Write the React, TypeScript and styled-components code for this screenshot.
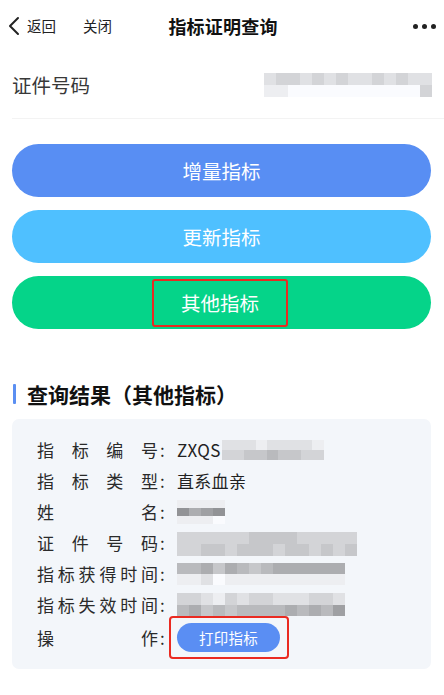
import React from "react";
import styled, { createGlobalStyle } from "styled-components";

const GlobalStyle = createGlobalStyle`
  html, body { margin: 0; padding: 0; background: #ffffff; }
  body {
    font-family: "Noto Sans CJK SC", "Noto Sans", "Liberation Sans", sans-serif;
    color: #222;
    -webkit-font-smoothing: antialiased;
  }
  * { box-sizing: border-box; }
`;

const Page = styled.div`
  width: 444px;
  min-height: 695px;
  background: #fff;
`;

const NavBar = styled.div`
  height: 52px;
  display: grid;
  grid-template-columns: 1fr auto 1fr;
  align-items: center;
  padding: 0 6px 0 8px;
`;

const NavLeft = styled.div`
  display: flex;
  align-items: center;
`;

const NavLink = styled.span<{ $gap?: number }>`
  font-size: 14.5px;
  color: #222;
  margin-left: ${(p) => p.$gap ?? 0}px;
  line-height: 20px;
`;

const NavTitle = styled.div`
  font-size: 18px;
  font-weight: 700;
  color: #111;
  letter-spacing: 0.2px;
`;

const NavRight = styled.div`
  display: flex;
  justify-content: flex-end;
  gap: 4px;
  padding-right: 2px;
`;

const Dot = styled.span`
  width: 5px;
  height: 5px;
  border-radius: 50%;
  background: #222;
`;

const IdRow = styled.div`
  height: 67px;
  margin-left: 12px;
  padding-right: 12px;
  display: flex;
  align-items: center;
  justify-content: space-between;
  border-bottom: 1px solid #f3f3f3;
`;

const IdLabel = styled.span`
  font-size: 19.5px;
  color: #383838;
  margin-top: -2px;
`;

const ButtonStack = styled.div`
  display: flex;
  flex-direction: column;
  gap: 13px;
  padding: 25px 13px 0 12px;
`;

const BigButton = styled.div<{ $bg: string }>`
  height: 53px;
  border-radius: 27px;
  background: ${(p) => p.$bg};
  color: #fff;
  font-size: 19.5px;
  display: flex;
  align-items: center;
  justify-content: center;
`;

const HighlightText = styled.span`
  display: inline-block;
  padding: 10px 27px;
  line-height: 24px;
  border: 2px solid #ea2a21;
  border-radius: 3px;
  margin-left: -3px;
`;

const SectionTitle = styled.div`
  margin: 52px 0 0 13px;
  display: flex;
  align-items: center;
  height: 26px;
`;

const TitleBar = styled.span`
  width: 3px;
  height: 20px;
  background: #5b8ff2;
  border-radius: 1px;
  margin-right: 11px;
`;

const TitleText = styled.span`
  font-size: 21px;
  font-weight: 700;
  color: #111;
  line-height: 26px;
`;

const Card = styled.div`
  margin: 12px 13px 0 12px;
  background: #f3f6fa;
  border-radius: 7px;
  padding: 15px 0 14px 25px;
`;

const InfoRow = styled.div<{ $h?: number }>`
  display: flex;
  align-items: center;
  height: ${(p) => p.$h ?? 31}px;
  font-size: 17px;
  color: #222;
`;

const Label = styled.span`
  width: 121px;
  text-align: justify;
  text-align-last: justify;
  color: #2a2a2a;
  white-space: nowrap;
`;

const Colon = styled.span`
  width: 19px;
  padding-left: 2px;
  color: #2a2a2a;
`;

const Value = styled.span`
  display: flex;
  align-items: center;
  letter-spacing: 0.3px;
`;

const PrintWrap = styled.span`
  position: relative;
  display: inline-flex;
  &::after {
    content: "";
    position: absolute;
    inset: -7px -9px -7px -8px;
    border: 2px solid #ea2a21;
    border-radius: 4px;
    pointer-events: none;
  }
`;

const PrintButton = styled.span`
  width: 103px;
  height: 29px;
  border-radius: 15px;
  background: #5a8ef3;
  color: #fff;
  font-size: 14.5px;
  display: flex;
  align-items: center;
  justify-content: center;
  letter-spacing: 0.3px;
`;

const MosaicGrid = styled.div<{ $w: number; $h: number; $cols: number; $rows: number }>`
  width: ${(p) => p.$w}px;
  height: ${(p) => p.$h}px;
  display: grid;
  grid-template-columns: repeat(${(p) => p.$cols}, 1fr);
  grid-template-rows: repeat(${(p) => p.$rows}, 1fr);
  flex-shrink: 0;
`;

const Cell = styled.span``;

const shade = (d: string) => {
  const v = 250 - parseInt(d, 10) * 13;
  return `rgb(${v}, ${v + 1}, ${v + 4})`;
};

const Mosaic: React.FC<{ w: number; h: number; rows: string[]; style?: React.CSSProperties }> = ({
  w,
  h,
  rows,
  style,
}) => (
  <MosaicGrid $w={w} $h={h} $cols={rows[0].length} $rows={rows.length} style={style}>
    {rows.flatMap((r, i) =>
      r.split("").map((c, j) => <Cell key={`${i}-${j}`} style={{ background: shade(c) }} />)
    )}
  </MosaicGrid>
);

const Chevron = () => (
  <svg width="12" height="20" viewBox="0 0 12 20" fill="none">
    <path d="M10 2 L2 10 L10 18" stroke="#222" strokeWidth="2" strokeLinecap="round" strokeLinejoin="round" />
  </svg>
);

const rows: { label: string; value: React.ReactNode }[] = [
  {
    label: "指标编号",
    value: (
      <>
        ZXQS
        <Mosaic w={102} h={20} rows={["222122221", "334454433"]} style={{ marginLeft: 1 }} />
      </>
    ),
  },
  { label: "指标类型", value: "直系血亲" },
  { label: "姓名", value: <Mosaic w={48} h={24} rows={["1111", "8678", "1110"]} /> },
  {
    label: "证件号码",
    value: <Mosaic w={180} h={24} rows={["333333444433333", "334434443443434"]} style={{ marginTop: 2 }} />,
  },
  {
    label: "指标获得时间",
    value: <Mosaic w={168} h={22} rows={["55646545666666", "11201111111111"]} />,
  },
  {
    label: "指标失效时间",
    value: <Mosaic w={168} h={23} rows={["33213233222332", "56454555565657"]} />,
  },
];

export default function App() {
  return (
    <Page>
      <GlobalStyle />
      <NavBar>
        <NavLeft>
          <Chevron />
          <NavLink $gap={7}>返回</NavLink>
          <NavLink $gap={27}>关闭</NavLink>
        </NavLeft>
        <NavTitle>指标证明查询</NavTitle>
        <NavRight>
          <Dot />
          <Dot />
          <Dot />
        </NavRight>
      </NavBar>

      <IdRow>
        <IdLabel>证件号码</IdLabel>
        <Mosaic w={168} h={24} rows={["23323232232322", "11000000000003"]} />
      </IdRow>

      <ButtonStack>
        <BigButton $bg="#588ef3">增量指标</BigButton>
        <BigButton $bg="#4fc0ff">更新指标</BigButton>
        <BigButton $bg="#05d489">
          <HighlightText>其他指标</HighlightText>
        </BigButton>
      </ButtonStack>

      <SectionTitle>
        <TitleBar />
        <TitleText>查询结果（其他指标）</TitleText>
      </SectionTitle>

      <Card>
        {rows.map((r) => (
          <InfoRow key={r.label}>
            <Label>{r.label}</Label>
            <Colon>:</Colon>
            <Value>{r.value}</Value>
          </InfoRow>
        ))}
        <InfoRow $h={35}>
          <Label>操作</Label>
          <Colon>:</Colon>
          <Value>
            <PrintWrap>
              <PrintButton>打印指标</PrintButton>
            </PrintWrap>
          </Value>
        </InfoRow>
      </Card>
    </Page>
  );
}
